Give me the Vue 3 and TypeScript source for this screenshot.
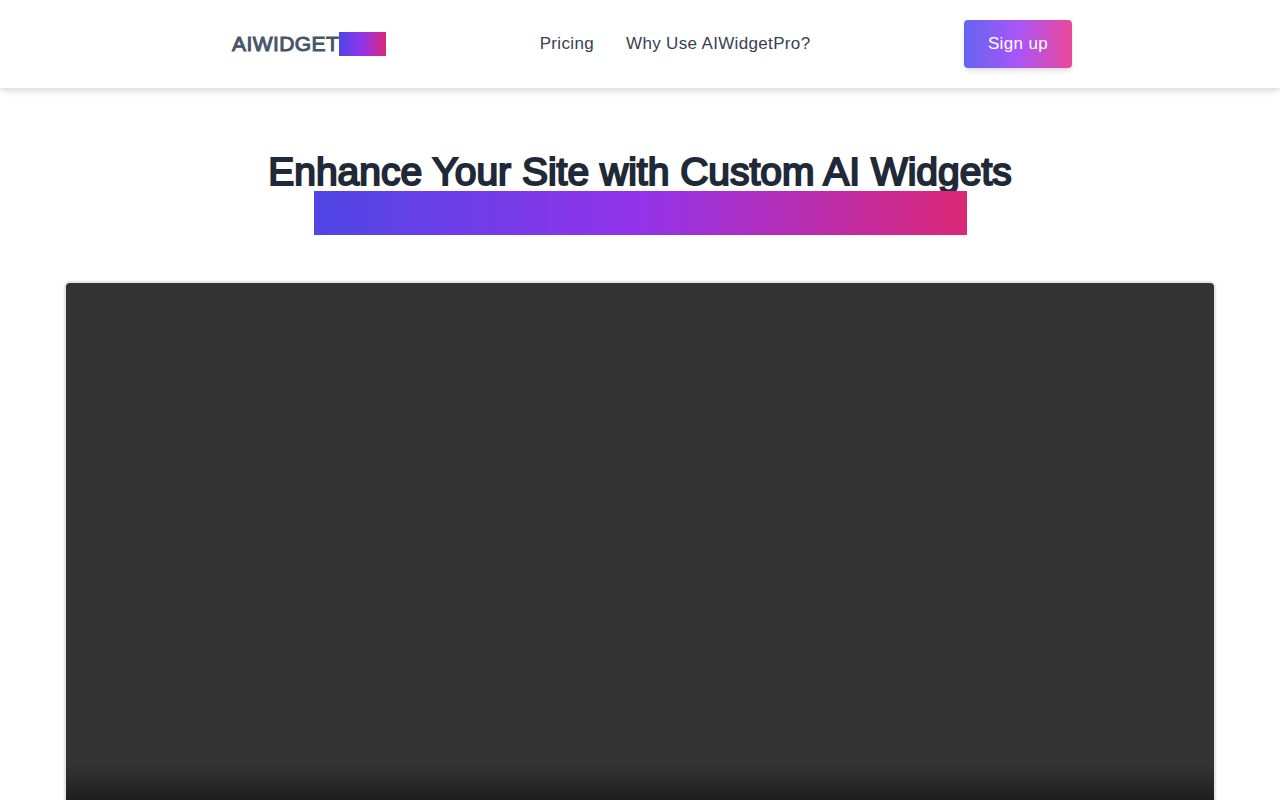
<script setup lang="ts">
interface NavLink {
  label: string
  href: string
}

const links: NavLink[] = [
  { label: 'Pricing', href: '#pricing' },
  { label: 'Why Use AIWidgetPro?', href: '#why' },
]
</script>

<template>
  <div class="page">
    <header class="header">
      <div class="bar">
        <a class="logo" href="#">AIWIDGET<span class="logo-block"></span></a>
        <nav class="nav">
          <a v-for="link in links" :key="link.href" :href="link.href">{{ link.label }}</a>
        </nav>
        <button class="signup" type="button">Sign up</button>
      </div>
    </header>
    <main class="hero">
      <h1 class="title">Enhance Your Site with Custom AI Widgets</h1>
      <div class="title-block"></div>
      <video class="player"></video>
    </main>
  </div>
</template>

<style>
body {
  margin: 0;
  background: #fff;
}
</style>

<style scoped>
.page {
  height: 100vh;
  overflow: hidden;
  font-family: "Liberation Sans", Arial, sans-serif;
  color: #1f2937;
}

.header {
  border-bottom: 1px solid #e5e7eb;
  box-shadow: 0 4px 6px -1px rgba(0, 0, 0, 0.1), 0 2px 4px -2px rgba(0, 0, 0, 0.1);
}

.bar {
  display: flex;
  align-items: center;
  justify-content: space-between;
  box-sizing: border-box;
  max-width: 864px;
  margin: 0 auto;
  padding: 20px 0 20px 24px;
}

.logo {
  display: flex;
  align-items: center;
  font-size: 21px;
  line-height: 24px;
  letter-spacing: 0.02em;
  color: #475569;
  text-decoration: none;
  -webkit-text-stroke: 1px #475569;
}

.logo-block {
  width: 47px;
  height: 24px;
  background: linear-gradient(to right, #4f46e5, #9333ea, #db2777);
}

.nav {
  display: flex;
  gap: 32px;
}

.nav a {
  font-size: 17px;
  line-height: 24px;
  letter-spacing: 0.02em;
  color: #374151;
  text-decoration: none;
}

.signup {
  padding: 12px 24px;
  border: 0;
  border-radius: 4px;
  font-family: inherit;
  font-size: 17px;
  line-height: 24px;
  letter-spacing: 0.02em;
  color: #fff;
  background: linear-gradient(to right, #6366f1, #a855f7, #ec4899);
  box-shadow: 0 4px 6px -1px rgba(0, 0, 0, 0.1), 0 2px 4px -2px rgba(0, 0, 0, 0.1);
}

.hero {
  display: flex;
  flex-direction: column;
  align-items: center;
  padding: 64px 64px 0;
}

.title {
  margin: 0;
  font-size: 39px;
  line-height: 38px;
  font-weight: 400;
  text-align: center;
  -webkit-text-stroke: 2px #1f2937;
}

.title-block {
  position: relative;
  width: 100%;
  max-width: 653px;
  height: 44px;
  background: linear-gradient(to right, #4f46e5, #9333ea, #db2777);
}

.player {
  box-sizing: border-box;
  display: block;
  width: 100%;
  aspect-ratio: 16 / 9;
  margin-top: 46px;
  border: 2px solid #e5e7eb;
  border-radius: 6px;
  background: linear-gradient(to bottom, #333 482px, #1e1e1e 517px, #000 100%);
  box-shadow: 0 1px 3px rgba(0, 0, 0, 0.1);
}
</style>
